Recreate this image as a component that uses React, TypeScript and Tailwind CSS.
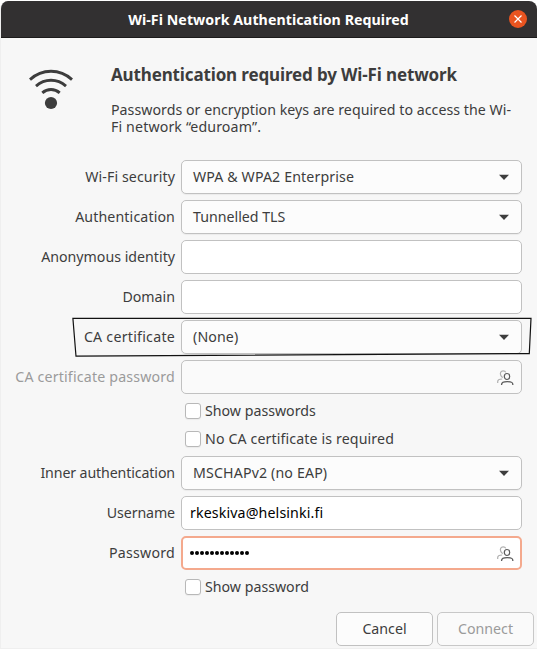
import type { ReactNode } from "react";
import clsx from "clsx";

function WifiIcon() {
  return (
    <svg width="46" height="42" viewBox="0 0 46 42" fill="none" stroke="#3d3d3d" strokeWidth="2.9">
      <path d="M2 11.6C14.2 0.5 31.8 0.5 44 11.6" />
      <path d="M8 18.1C16.7 10.3 29.3 10.3 38 18.1" />
      <path d="M14.3 24.8C19.4 20.4 26.6 20.4 31.7 24.8" />
      <circle cx="23" cy="35" r="6.1" fill="#3d3d3d" stroke="none" />
    </svg>
  );
}

function UsersIcon() {
  return (
    <svg width="17" height="16" viewBox="0 0 17 16" fill="none">
      <g stroke="#b0b0b0" strokeWidth="1.2">
        <path d="M3.8 5.6C2.7 3 3.8 0.8 6.2 0.8C7.5 0.8 8.4 1.4 8.8 2.4" />
        <path d="M3.7 5.2C4.2 6.6 5 7.3 6 7.5" />
        <path d="M0.7 13V11.6C0.7 9.8 2.2 9 5.2 9" />
      </g>
      <ellipse cx="10" cy="6.5" rx="2.7" ry="3" stroke="#5a5a5a" strokeWidth="1.2" />
      <path
        d="M4.6 15V14.3C4.6 12.4 6.2 11.6 10.2 11.6C14.2 11.6 15.8 12.4 15.8 14.3V15"
        stroke="#5a5a5a"
        strokeWidth="1.3"
      />
    </svg>
  );
}

interface RowProps {
  label: string;
  tracking?: string;
  muted?: boolean;
  children: ReactNode;
}

function Row({ label, tracking, muted, children }: RowProps) {
  return (
    <div className="flex h-[34px] items-center">
      <span
        className={clsx(
          "w-[175px] pb-0.5 text-right whitespace-nowrap",
          muted && "text-[#9b9b9b]",
          tracking
        )}
      >
        {label}
      </span>
      <div className="ml-1.5 h-full w-[341px]">{children}</div>
    </div>
  );
}

function Select({ value, tracking }: { value: string; tracking?: string }) {
  return (
    <button className="flex h-full w-full items-center justify-between rounded-[5px] border border-[#c1c1c1] bg-[#fcfcfc] pr-3 pl-[11px] shadow-[0_1px_1px_rgba(0,0,0,0.05)]">
      <span className={clsx("pb-0.5", tracking)}>{value}</span>
      <svg width="10" height="6" viewBox="0 0 10 6" fill="#3d3d3d">
        <path d="M0 0.8H10L5 6Z" />
      </svg>
    </button>
  );
}

interface FieldProps {
  children?: ReactNode;
  icon?: boolean;
  disabled?: boolean;
  focused?: boolean;
}

function Field({ children, icon, disabled, focused }: FieldProps) {
  return (
    <div
      className={clsx(
        "flex h-full items-center rounded-[5px] text-black",
        focused ? "border-2 border-[#f4a98d] pr-1.5 pl-[7px]" : "border border-[#c1c1c1] pr-[7px] pl-2",
        disabled ? "bg-[#fafafa]" : "bg-white"
      )}
    >
      {children}
      {icon && (
        <span className="mt-0.5 ml-auto">
          <UsersIcon />
        </span>
      )}
    </div>
  );
}

function Checkbox({ label, tracking }: { label: string; tracking?: string }) {
  return (
    <div className="ml-[185px] flex h-4 items-center gap-1">
      <span className="size-4 rounded-[3px] border border-[#b8b8b8] bg-white shadow-[0_1px_1px_rgba(0,0,0,0.05)]" />
      <span className={clsx("pb-0.5", tracking)}>{label}</span>
    </div>
  );
}

export default function App() {
  return (
    <div className="h-[649px] w-[537px] bg-white pt-px font-['Noto_Sans',sans-serif] text-[14.2px] leading-[17px] text-[#3d3d3d]">
      <div className="relative flex h-[648px] flex-col overflow-hidden rounded-t-lg border-b border-l border-[#efefef] bg-[#f7f7f7]">
        {/* Title bar */}
        <header className="relative -ml-px flex h-[37px] shrink-0 items-center justify-center border-b border-[#1c1b1b] bg-[#323031] text-white">
          <h1 className="text-[14.2px] font-bold tracking-[0.06px]">Wi-Fi Network Authentication Required</h1>
          <button className="absolute top-[9px] right-[10px] flex size-[18px] items-center justify-center rounded-full bg-[#e95420]">
            <svg width="8" height="8" viewBox="0 0 8 8" stroke="#fff" strokeWidth="1.2">
              <path d="M0.5 0.5L7.5 7.5M7.5 0.5L0.5 7.5" />
            </svg>
          </button>
        </header>

        <section className="-ml-px flex h-[122px] shrink-0 pl-7">
          <div className="mt-[30px] w-[83px]">
            <WifiIcon />
          </div>
          <div className="whitespace-nowrap">
            <h2 className="mt-[26px] text-[17px] leading-[22px] font-bold tracking-[-0.14px]">
              Authentication required by Wi-Fi network
            </h2>
            <p className="mt-[15px] tracking-[0.03px]">
              Passwords or encryption keys are required to access the Wi-
              <br />
              <span className="tracking-[0.13px]">Fi network “eduroam”.</span>
            </p>
          </div>
        </section>

        <form className="-ml-px">
          <div className="flex flex-col gap-1.5">
            <Row label="Wi-Fi security" tracking="tracking-[0.1px]">
              <Select value="WPA & WPA2 Enterprise" tracking="tracking-[0.12px]" />
            </Row>
            <Row label="Authentication" tracking="tracking-[0.12px]">
              <Select value="Tunnelled TLS" />
            </Row>
            <Row label="Anonymous identity">
              <Field />
            </Row>
            <Row label="Domain">
              <Field />
            </Row>
            <Row label="CA certificate" tracking="tracking-[0.25px]">
              <Select value="(None)" tracking="tracking-[0.12px]" />
            </Row>
            <Row label="CA certificate password" tracking="tracking-[0.18px]" muted>
              <Field icon disabled />
            </Row>
          </div>
          <div className="mt-[9px] mb-[9px] flex flex-col gap-3">
            <Checkbox label="Show passwords" />
            <Checkbox label="No CA certificate is required" tracking="tracking-[0.12px]" />
          </div>
          <div className="flex flex-col gap-1.5">
            <Row label="Inner authentication" tracking="tracking-[-0.12px]">
              <Select value="MSCHAPv2 (no EAP)" tracking="tracking-[0.14px]" />
            </Row>
            <Row label="Username" tracking="tracking-[-0.1px]">
              <Field>
                <span className="pb-0.5 tracking-[0.13px]">rkeskiva@helsinki.fi</span>
              </Field>
            </Row>
            <Row label="Password" tracking="tracking-[0.24px]">
              <Field icon focused>
                <span className="flex gap-px">
                  {Array.from({ length: 12 }, (_, i) => (
                    <i key={i} className="size-1 rounded-full bg-black" />
                  ))}
                </span>
              </Field>
            </Row>
          </div>
          <div className="mt-[9px]">
            <Checkbox label="Show password" />
          </div>
        </form>

        <footer className="mt-[17px] flex justify-end gap-1 pr-[3px]">
          <button className="h-[34px] w-[97px] rounded-[5px] border border-[#c1c1c1] bg-[#fcfcfc] pb-0.5">
            Cancel
          </button>
          <button className="h-[34px] w-[97px] rounded-[5px] border border-[#c8c8c8] bg-[#fafafa] pb-0.5 text-[#9b9b9b]">
            Connect
          </button>
        </footer>

        {/* Hand-drawn frame around the CA certificate row */}
        <svg
          className="pointer-events-none absolute top-[316px] left-[71px]"
          width="464"
          height="42"
          viewBox="0 0 464 42"
          fill="none"
          stroke="#111"
          strokeWidth="1.2"
        >
          <path d="M0.9 1.3L459 1.3L457.3 36.6L4 39.2Z" />
        </svg>
      </div>
    </div>
  );
}
